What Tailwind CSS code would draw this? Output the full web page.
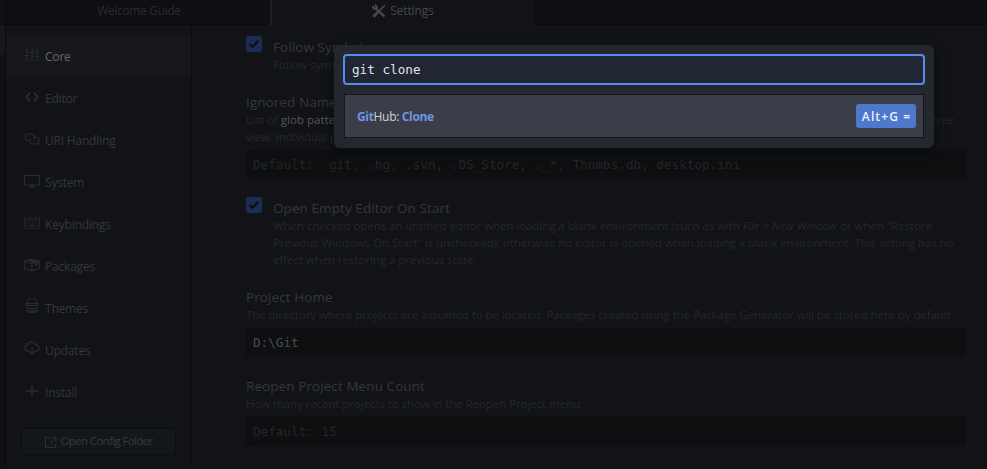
<!DOCTYPE html>
<html lang="en">
<head>
<meta charset="utf-8">
<title>Settings</title>
<script src="https://cdn.jsdelivr.net/npm/@tailwindcss/browser@4"></script>
</head>
<body class="relative flex h-[469px] w-[987px] overflow-hidden bg-[#111317] font-['Open_Sans','Noto_Sans',sans-serif] text-[12px] whitespace-nowrap text-[#35373b]">
  <!-- Dock edge -->
  <div class="h-full w-[6px] shrink-0 border-r border-[#0a0b0d] bg-[#0f1013] pt-[25px]"><div class="h-[30px] bg-[#16181c]"></div></div>
  <div class="flex min-w-0 flex-1 flex-col">
    <!-- Tabs -->
    <header class="flex h-[25px] shrink-0 text-[12px]">
      <div class="flex w-[264px] justify-center border-b border-[#0a0b0d] bg-[#0e0f12] pl-[2px] leading-[22px] text-[#292b2e]"><span class="tracking-[-0.350px]">Welcome Guide</span></div>
      <div class="flex w-[264px] items-start justify-center gap-1 border-l-2 border-[#1d1f23] leading-[22px] text-[#46484c]">
        <svg class="mt-[4px] h-[14px] w-[14px]" viewBox="0 0 16 16" fill="none" stroke="currentColor"><path stroke-width="2.600" d="M5 5.500 14.300 14.500"/><path stroke-width="2.600" d="M1.200 2.200C1 4.500 2.500 5.800 4.500 5.400 6 4.500 5.500 2 3.200 1.300"/><path stroke-width="1.800" d="M9 7 14.800 1.300"/><path stroke-width="3.200" d="M1.500 14.500 7 9"/></svg>
        <span class="tracking-[-0.100px]">Settings</span>
      </div>
      <div class="flex-1 border-b border-l border-[#0a0b0d] bg-[#0e0f12]"></div>
    </header>
    <div class="flex flex-1">
      <!-- Sidebar -->
      <nav class="flex w-[186px] shrink-0 flex-col border-r border-[#0c0d10] pt-[10px] tracking-[-0.200px]">
        <div class="flex h-[42px] items-center gap-[5px] bg-[#15171b] pl-[18px] text-[#65676b]">
          <svg class="-mt-[2px] h-4 w-4 text-[#2c2e32]" viewBox="0 0 16 16" fill="none" stroke="currentColor" stroke-width="1.2"><path d="M3 2v5M3 10v4M8 2v2M8 7v7M13 2v6M13 11v3M.5 8.500h5M5.500 5.500h5M10.500 9.500h5"/></svg><span class="pt-[2px]">Core</span></div>
        <div class="flex h-[42px] items-center gap-[5px] pl-[18px]">
          <svg class="-mt-[2px] h-4 w-4 text-[#2a2c30]" viewBox="0 0 16 16" fill="none" stroke="currentColor" stroke-width="1.8"><path d="M6 3.500 2.300 8 6 12.500M10 3.500 13.700 8 10 12.500"/></svg><span class="pt-[2px]">Editor</span></div>
        <div class="flex h-[42px] items-center gap-[5px] pl-[18px]">
          <svg class="-mt-[2px] h-4 w-4 text-[#2a2c30]" viewBox="0 0 16 16" fill="none" stroke="currentColor" stroke-width="1.2"><path d="M4.500 9.500H4A3.300 3.300 0 0 1 4 3h3.500a3.300 3.300 0 0 1 2.500 5.300M11.500 6.500H12a3.200 3.200 0 0 1 0 6.500H9a3.200 3.200 0 0 1-2.500-5.300"/></svg><span class="pt-[2px]">URI Handling</span></div>
        <div class="flex h-[42px] items-center gap-[5px] pl-[18px]">
          <svg class="-mt-[2px] h-4 w-4 text-[#2a2c30]" viewBox="0 0 16 16" fill="none" stroke="currentColor" stroke-width="1.1"><path d="M.6 2.500h14.800v9.500H.6zM5 13.800h6M7 12v2M9 12v2"/></svg><span class="pt-[2px]">System</span></div>
        <div class="flex h-[42px] items-center gap-[5px] pl-[18px]">
          <svg class="-mt-[2px] h-4 w-4 text-[#25272b]" viewBox="0 0 16 16" fill="none" stroke="currentColor"><path d="M.5 3.500h15v9.500H.5z"/><path stroke-dasharray="1.300 .7" d="M2 5.500h12M2 8h12M2 10.500h2"/><path d="M5 10.500h6M12 10.500h2"/></svg><span class="pt-[2px]">Keybindings</span></div>
        <div class="flex h-[42px] items-center gap-[5px] pl-[18px]">
          <svg class="-mt-[2px] h-4 w-4 text-[#2a2c30]" viewBox="0 0 16 16" fill="none" stroke="currentColor" stroke-width="1.100"><path d="M.6 4.300 8 2l7.400 2.300v7.200L8 14 .6 11.500zM.6 4.300 8 6.500l7.400-2.200M8 6.500V14M4 3.300l7.500 2.200v3l1.800-.6V5L6 2.700"/></svg><span class="pt-[2px]">Packages</span></div>
        <div class="flex h-[42px] items-center gap-[5px] pl-[18px]">
          <svg class="-mt-[4px] h-4 w-4 text-[#2a2c30]" viewBox="0 0 16 16" fill="none" stroke="currentColor" stroke-width="1.200"><path d="M2.500 6a5.500 5.500 0 0 1 11 0M2.500 5.500v2h11v-2zM3.200 7.500v5.500c0 2 9.600 2 9.600 0V7.500"/><path stroke-width="1.600" d="M5 10.500h6M4.500 13h7"/></svg><span class="pt-[2px]">Themes</span></div>
        <div class="flex h-[42px] items-center gap-[5px] pl-[18px]">
          <svg class="-mt-[4px] h-4 w-4 text-[#2a2c30]" viewBox="0 0 16 16" fill="none" stroke="currentColor" stroke-width="1.300"><path d="M5.500 11H3.800a3 3 0 0 1-.2-6C4.500 1 10.500.5 11.700 5c4.500 0 4.800 6 .5 6H10.500M8 6.500V14M5.800 11.700 8 14l2.200-2.300"/></svg><span class="pt-[2px]">Updates</span></div>
        <div class="flex h-[42px] items-center gap-[5px] pl-[18px]">
          <svg class="-mt-[2px] h-4 w-4 text-[#2a2c30]" viewBox="0 0 16 16" fill="none" stroke="currentColor" stroke-width="1.500"><path d="M8 2v12M2 8h12"/></svg><span class="pt-[2px]">Install</span></div>
        <div class="mt-[15px] ml-[15px] flex h-[27px] w-[155px] items-center justify-center gap-1 rounded-[3px] border border-[#0b0c0e] bg-[#14171a] pb-[2px] text-[11.500px] tracking-[-0.650px]">
          <svg class="mt-[3px] h-3 w-3 text-[#2c2e32]" viewBox="0 0 12 12" fill="none" stroke="currentColor"><path d="M4.500 1.500h-4v10h10V8M7 1.500h4v4M11 1.500l-5.500 5.500"/></svg><span>Open Config Folder</span></div>
      </nav>
      <!-- Settings panel -->
      <main class="ml-[54px] w-[720px] text-[11.500px] leading-[17px] tracking-[-0.070px] text-[#25272a]">
        <section class="flex gap-[11px] pt-[11px]">
          <svg class="h-4 w-4 rounded-[2px] bg-[#1c2d55]" viewBox="0 0 16 16" fill="none" stroke="#0c0e14" stroke-width="2.200"><path d="m3.500 8 3 3 6-6.500"/></svg>
          <div><h2 class="pt-px text-[13.500px] leading-5 tracking-[0.080px] text-[#35373b]">Follow Symlinks</h2><p class="-mt-px">Follow symbolic links when searching files.</p></div>
        </section>
        <section class="mt-[19px]">
          <h2 class="pt-px text-[13.500px] leading-[18px] tracking-[0.080px] text-[#35373b]">Ignored Names</h2>
          <p class="flex justify-between pr-[12px]"><span>List of <span class="tracking-[0.050px] text-[#55575b]">glob patterns</span>. Files and directories matching these patterns will be ignored</span><span>tree</span></p>
          <p>view. Individual packages might have additional config settings.</p>
          <div class="mt-[5px] h-[29px] rounded-[3px] bg-[#0e0f10] pl-[7px] font-['DejaVu_Sans_Mono',monospace] text-[12.650px] leading-[29px] tracking-normal text-[#232528]">Default: .git, .hg, .svn, .DS_Store, ._*, Thumbs.db, desktop.ini</div>
        </section>
        <section class="mt-[18px] flex gap-[11px]">
          <svg class="h-4 w-4 rounded-[2px] bg-[#1c2d55]" viewBox="0 0 16 16" fill="none" stroke="#0c0e14" stroke-width="2.200"><path d="m3.500 8 3 3 6-6.500"/></svg>
          <div><h2 class="pt-px text-[13.500px] leading-5 tracking-[0.080px] text-[#35373b]">Open Empty Editor On Start</h2>
          <div class="-mt-px tracking-[-0.055px]">
          <p>When checked opens an untitled editor when loading a blank environment (such as with <i>File &gt; New Window</i> or when "Restore</p>
          <p>Previous Windows On Start" is unchecked); otherwise no editor is opened when loading a blank environment. This setting has no</p>
          <p>effect when restoring a previous state.</p></div></div>
        </section>
        <section class="mt-[20px]">
          <h2 class="text-[13.500px] leading-[19px] tracking-[0.080px] text-[#35373b]">Project Home</h2>
          <p class="-mt-px">The directory where projects are assumed to be located. Packages created using the Package Generator will be stored here by default.</p>
          <div class="mt-[5px] h-[29px] rounded-[3px] bg-[#0e0f10] pl-[7px] font-['DejaVu_Sans_Mono',monospace] text-[12.650px] leading-[29px] tracking-normal text-[#4a4c50]">D:\Git</div>
        </section>
        <section class="mt-[19px]">
          <h2 class="pt-px text-[13.500px] leading-[18px] tracking-[0.080px] text-[#35373b]">Reopen Project Menu Count</h2>
          <p>How many recent projects to show in the Reopen Project menu.</p>
          <div class="mt-[5px] h-[29px] rounded-[3px] bg-[#0e0f10] pl-[7px] font-['DejaVu_Sans_Mono',monospace] text-[12.650px] leading-[29px] tracking-normal text-[#232528]">Default: 15</div>
        </section>
      </main>
    </div>
  </div>
  <!-- Command palette -->
  <div class="absolute top-[45px] left-[334px] h-[103px] w-[600px] rounded-[6px] bg-[#25272f] px-[9px] pt-[9px] shadow-[0_4px_12px_rgba(0,0,0,0.5)]">
    <div class="h-[31px] w-[582px] rounded-[4px] border-2 border-[#568af2] bg-[#212633] pl-[7px] font-['DejaVu_Sans_Mono',monospace] text-[12.650px] leading-[27px] text-[#e3e5e9]">git clone</div>
    <div class="mt-[9px] ml-px flex h-[44px] w-[580px] items-center justify-between border border-[#17181d] bg-[#3b3e49] pr-[7px] pl-[12px]">
      <div class="pt-[2px] text-[12px] tracking-[-0.330px] text-[#ced1d8]"><b class="text-[#7095e8]">Git</b>Hub: <b class="text-[#7095e8]">Clone</b></div>
      <kbd class="flex h-6 w-[60px] items-center justify-center rounded-[3px] bg-[#4d78cc] pt-[2px] pl-px font-['Open_Sans',sans-serif] text-[12px] font-semibold tracking-[1.100px] text-[#edf1fa]">Alt+G&nbsp;=</kbd>
    </div>
  </div>
</body>
</html>
